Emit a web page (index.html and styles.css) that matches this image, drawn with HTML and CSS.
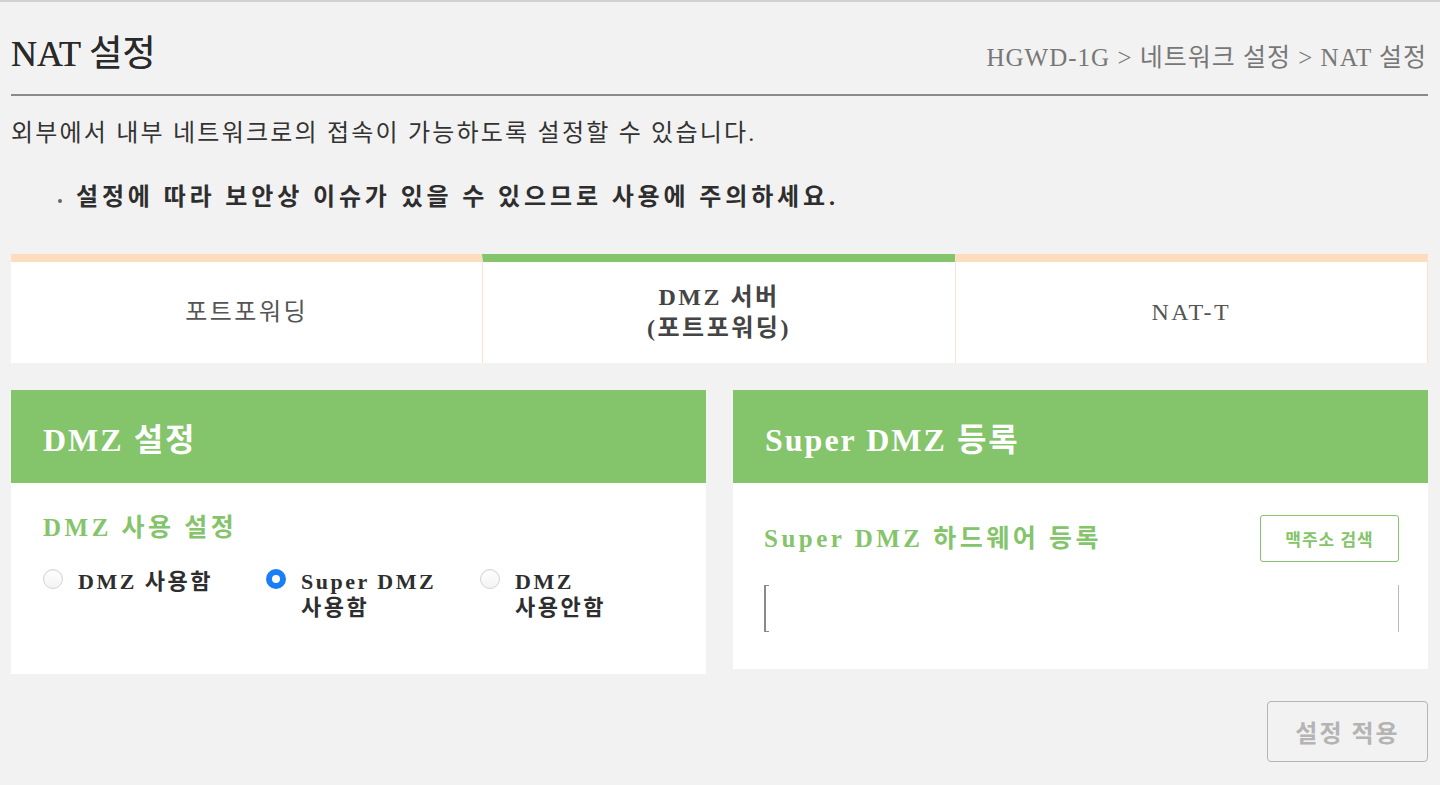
FILE: index.html
```html
<!DOCTYPE html>
<html lang="ko">

<head>
   <meta charset="UTF-8">
   <meta name="viewport" content="width=device-width, initial-scale=1.0">
   <title>NAT 설정</title>
   <link rel="stylesheet" href="styles.css">
</head>

<body>
   <div class="pagina">
      <!-- Cabecera -->
      <div class="cabecera">
         <h1 class="titulo">NAT 설정</h1>
         <div class="ruta">HGWD-1G &gt; 네트워크 설정 &gt; NAT 설정</div>
      </div>

      <p class="descripcion">외부에서 내부 네트워크로의 접속이 가능하도록 설정할 수 있습니다.</p>
      <ul class="avisos">
         <li><span class="punto"></span>설정에 따라 보안상 이슈가 있을 수 있으므로 사용에 주의하세요.</li>
      </ul>

      <!-- Pestañas -->
      <div class="pestanas">
         <div class="pestana">포트포워딩</div>
         <div class="pestana activa">DMZ 서버<br>(포트포워딩)</div>
         <div class="pestana">NAT-T</div>
      </div>

      <!-- Tarjetas -->
      <div class="tarjetas">
         <div class="tarjeta">
            <div class="tarjeta-cab">DMZ 설정</div>
            <div class="tarjeta-cuerpo izq">
               <h2 class="subtitulo">DMZ 사용 설정</h2>
               <div class="opciones">
                  <label class="opcion">
                     <input type="radio" name="dmz">
                     <span class="texto">DMZ 사용함</span>
                  </label>
                  <label class="opcion">
                     <input type="radio" name="dmz" checked>
                     <span class="texto">Super DMZ 사용함</span>
                  </label>
                  <label class="opcion">
                     <input type="radio" name="dmz">
                     <span class="texto">DMZ 사용안함</span>
                  </label>
               </div>
            </div>
         </div>

         <div class="tarjeta">
            <div class="tarjeta-cab">Super DMZ 등록</div>
            <div class="tarjeta-cuerpo der">
               <div class="fila">
                  <h2 class="subtitulo">Super DMZ 하드웨어 등록</h2>
                  <button class="btn-buscar">맥주소 검색</button>
               </div>
               <div class="caja-mac"></div>
            </div>
         </div>
      </div>

      <div class="acciones">
         <button class="btn-aplicar" disabled>설정 적용</button>
      </div>
   </div>
</body>

</html>
```

FILE: styles.css
```css
/* Estilos generales */
body {
   margin: 0;
   background: #f2f2f2;
   border-top: 2px solid #d2d2d2;
   font-family: "Liberation Serif", "Noto Sans CJK KR", serif;
   color: #333;
   word-break: keep-all;
}

.pagina {
   padding: 0 12px 0 11px;
}

/* Cabecera */
.cabecera {
   display: flex;
   justify-content: space-between;
   align-items: baseline;
   padding-top: 30px;
   padding-bottom: 18px;
   border-bottom: 2px solid #8a8a8a;
}

.titulo {
   margin: 0;
   font-size: 36px;
   font-weight: normal;
   line-height: 44px;
   color: #2a2a2a;
   text-shadow: 0 0 0.4px #2a2a2a;
}

.ruta {
   font-size: 25px;
   color: #777;
   letter-spacing: 1px;
   padding-right: 1px;
}

.descripcion {
   margin: 21px 0 0;
   font-size: 24px;
   line-height: 33px;
   letter-spacing: 2.2px;
   color: #333;
}

.avisos {
   list-style: none;
   margin: 30px 0 0;
   padding: 0 0 0 47px;
}

.avisos li {
   display: flex;
   align-items: center;
   font-size: 24px;
   font-weight: bold;
   line-height: 34px;
   letter-spacing: 3.85px;
   color: #2e2e2e;
}

.avisos .punto {
   width: 4px;
   height: 4px;
   border-radius: 50%;
   background: #666;
   margin: 8px 14px 0 0;
}

/* Pestañas */
.pestanas {
   display: flex;
   margin-top: 40px;
}

.pestana {
   flex: 1;
   height: 101px;
   display: flex;
   align-items: center;
   justify-content: center;
   text-align: center;
   background: #fff;
   border-top: 8px solid #fddcc0;
   border-left: 1px solid #fbe3d0;
   font-size: 24px;
   line-height: 31px;
   letter-spacing: 2.5px;
   color: #555;
}

.pestana:first-child {
   border-left: none;
}

.pestana:last-child {
   border-right: 1px solid #fbe3d0;
}

.pestana.activa {
   border-top-color: #84c46a;
   font-weight: bold;
   color: #444;
}

/* Tarjetas */
.tarjetas {
   display: flex;
   align-items: flex-start;
   gap: 27px;
   margin-top: 27px;
}

.tarjeta {
   flex: 1;
   background: #fff;
}

.tarjeta-cab {
   height: 93px;
   display: flex;
   align-items: center;
   padding-left: 32px;
   background: #84c46a;
   color: #fff;
   font-size: 32px;
   font-weight: bold;
   letter-spacing: 2px;
}

.tarjeta-cuerpo.izq {
   padding: 27px 32px 53px;
}

.tarjeta-cuerpo.der {
   padding: 32px 29px 37px 31px;
}

.subtitulo {
   margin: 0;
   font-size: 25px;
   line-height: 35px;
   letter-spacing: 3.5px;
   color: #84c46a;
}

.fila {
   display: flex;
   justify-content: space-between;
   align-items: center;
}

/* Opciones de radio */
.opciones {
   display: grid;
   grid-template-columns: 223px 214px 1fr;
   margin-top: 24px;
}

.opcion {
   display: flex;
   align-items: flex-start;
   gap: 15px;
   cursor: pointer;
}

.opcion input {
   appearance: none;
   -webkit-appearance: none;
   flex: none;
   width: 20px;
   height: 20px;
   margin: 0;
   border-radius: 50%;
   border: 1px solid #d4d4d4;
   background: linear-gradient(#ffffff, #f3f3f3);
   box-shadow: inset 0 1px 1px rgba(0, 0, 0, 0.06);
}

.opcion input:checked {
   border: 6px solid #1a7ef6;
   background: #fff;
   box-shadow: none;
}

.opcion .texto {
   max-width: 150px;
   font-size: 22px;
   font-weight: bold;
   line-height: 26px;
   letter-spacing: 2.5px;
   color: #2e2e2e;
}

/* Botones */
.btn-buscar {
   width: 139px;
   height: 47px;
   background: #fff;
   border: 1.5px solid #84c46a;
   border-radius: 3px;
   font-family: "Liberation Serif", "Noto Sans CJK KR", serif;
   font-size: 17px;
   font-weight: bold;
   letter-spacing: 1px;
   color: #84c46a;
}

.caja-mac {
   position: relative;
   height: 47px;
   margin-top: 23px;
   border-left: 2px solid #8a8a8a;
   border-right: 1px solid #b8b8b8;
}

.caja-mac::before,
.caja-mac::after {
   content: "";
   position: absolute;
   left: 0;
   width: 3px;
   height: 1px;
   background: #8a8a8a;
}

.caja-mac::before {
   top: 0;
}

.caja-mac::after {
   bottom: 0;
}

.acciones {
   display: flex;
   justify-content: flex-end;
   margin-top: 27px;
}

.btn-aplicar {
   width: 161px;
   height: 61px;
   background: transparent;
   border: 1.5px solid #b4b4b4;
   border-radius: 4px;
   font-family: "Liberation Serif", "Noto Sans CJK KR", serif;
   font-size: 24px;
   font-weight: bold;
   letter-spacing: 2px;
   color: #b4b4b4;
}
```
